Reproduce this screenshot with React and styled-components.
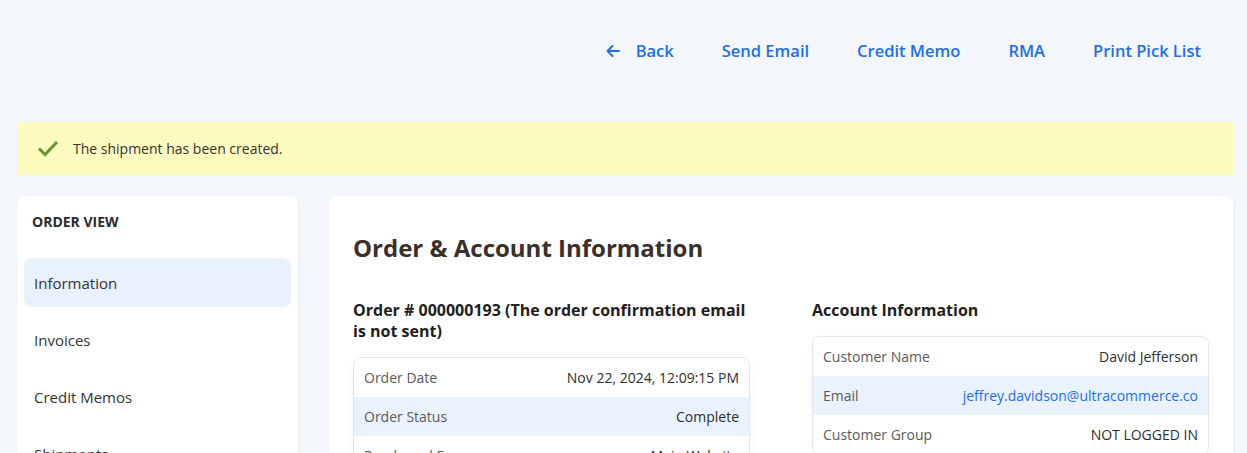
import React from "react";
import styled, { createGlobalStyle } from "styled-components";

const Global = createGlobalStyle`
  html, body { margin: 0; padding: 0; overflow: hidden; }
  body {
    background: #f3f6fa;
    font-family: "Open Sans", "Noto Sans", Arial, sans-serif;
    color: #333;
  }
  * { box-sizing: border-box; }
`;

const Page = styled.div`
  padding: 0 14px 0 17px;
`;

const TopNav = styled.nav`
  height: 102px;
  display: flex;
  justify-content: flex-end;
  align-items: center;
  gap: 48px;
  padding: 0 32px 0 0;
`;

const NavLink = styled.a`
  display: flex;
  align-items: center;
  gap: 15px;
  color: #1f6fe8;
  font-size: 16.5px;
  font-weight: 600;
  text-decoration: none;
  line-height: 22px;
`;

const Alert = styled.div`
  height: 53px;
  margin-top: 20px;
  background: #fefbbe;
  display: flex;
  align-items: center;
  gap: 14px;
  padding-left: 20px;
  font-size: 14px;
  color: #333;
`;

const Layout = styled.div`
  display: grid;
  grid-template-columns: 281px 1fr;
  gap: 31px;
  margin-top: 21px;
  align-items: start;
`;

const Card = styled.div`
  background: #fff;
  border-radius: 8px;
  box-shadow: 0 1px 3px rgba(20, 40, 80, 0.06);
`;

const Sidebar = styled(Card)`
  padding: 16px 7px 20px;
`;

const SideTitle = styled.div`
  font-size: 14px;
  font-weight: 700;
  color: #2b2b2b;
  line-height: 20px;
  padding-left: 8px;
  margin-bottom: 26px;
`;

const SideList = styled.div`
  display: flex;
  flex-direction: column;
  gap: 8px;
`;

const SideItem = styled.div`
  height: 49px;
  display: flex;
  align-items: center;
  padding-left: 10px;
  border-radius: 8px;
  font-size: 15px;
  color: #333;
  background: ${(p) => (p.$active ? "#e9f1fd" : "transparent")};
`;

const Main = styled(Card)`
  padding: 32px 24px 24px;
`;

const Title = styled.h1`
  margin: 0;
  font-size: 24px;
  font-weight: 700;
  line-height: 40px;
  color: #3a2f29;
`;

const Columns = styled.div`
  display: grid;
  grid-template-columns: 1fr 1fr;
  gap: 62px;
  margin-top: 32px;
`;

const SubTitle = styled.h2`
  margin: 0 0 15px;
  font-size: 16px;
  font-weight: 700;
  line-height: 21px;
  color: #1e1e1e;
`;

const Table = styled.div`
  border: 1px solid #e2e5ea;
  border-radius: 8px;
  overflow: hidden;
  box-shadow: 0 2px 8px rgba(20, 40, 80, 0.04);
`;

const Row = styled.div`
  height: 39px;
  display: flex;
  align-items: center;
  justify-content: space-between;
  padding: 0 10px;
  font-size: 14px;
  background: ${(p) => (p.$alt ? "#eaf2fd" : "#fff")};
`;

const Label = styled.span`
  color: #5a5a5a;
`;

const Value = styled.span`
  color: ${(p) => (p.$link ? "#1f6fe8" : "#2e2e2e")};
  white-space: nowrap;
`;

const BackArrow = () => (
  <svg width="16" height="16" viewBox="0 0 16 16" fill="none" stroke="#1f6fe8" strokeWidth="2" strokeLinecap="round" strokeLinejoin="round">
    <path d="M14 8H2.5M7.5 3L2.5 8l5 5" />
  </svg>
);

const Check = () => (
  <svg width="22" height="20" viewBox="0 0 22 20" fill="none" stroke="#5f9a35" strokeWidth="3" strokeLinecap="square">
    <path d="M3 10.5l5 5L19 4" />
  </svg>
);

const orderRows = [
  ["Order Date", "Nov 22, 2024, 12:09:15 PM"],
  ["Order Status", "Complete"],
  ["Purchased From", "Main Website"],
  ["Placed from IP", "127.0.0.1"],
];

const accountRows = [
  ["Customer Name", "David Jefferson"],
  ["Email", "jeffrey.davidson@ultracommerce.co", true],
  ["Customer Group", "NOT LOGGED IN"],
];

export default function App() {
  return (
    <Page>
      <Global />
      <TopNav>
        <NavLink href="#">
          <BackArrow />
          Back
        </NavLink>
        <NavLink href="#">Send Email</NavLink>
        <NavLink href="#">Credit Memo</NavLink>
        <NavLink href="#">RMA</NavLink>
        <NavLink href="#">Print Pick List</NavLink>
      </TopNav>
      <Alert>
        <Check />
        The shipment has been created.
      </Alert>
      <Layout>
        <Sidebar>
          <SideTitle>ORDER VIEW</SideTitle>
          <SideList>
            <SideItem $active>Information</SideItem>
            <SideItem>Invoices</SideItem>
            <SideItem>Credit Memos</SideItem>
            <SideItem>Shipments</SideItem>
            <SideItem>Comments History</SideItem>
          </SideList>
        </Sidebar>
        <Main>
          <Title>Order &amp; Account Information</Title>
          <Columns>
            <div>
              <SubTitle>Order # 000000193 (The order confirmation email is not sent)</SubTitle>
              <Table>
                {orderRows.map(([l, v], i) => (
                  <Row key={l} $alt={i % 2 === 1}>
                    <Label>{l}</Label>
                    <Value>{v}</Value>
                  </Row>
                ))}
              </Table>
            </div>
            <div>
              <SubTitle>Account Information</SubTitle>
              <Table>
                {accountRows.map(([l, v, link], i) => (
                  <Row key={l} $alt={i % 2 === 1}>
                    <Label>{l}</Label>
                    <Value $link={link}>{v}</Value>
                  </Row>
                ))}
              </Table>
            </div>
          </Columns>
        </Main>
      </Layout>
    </Page>
  );
}
